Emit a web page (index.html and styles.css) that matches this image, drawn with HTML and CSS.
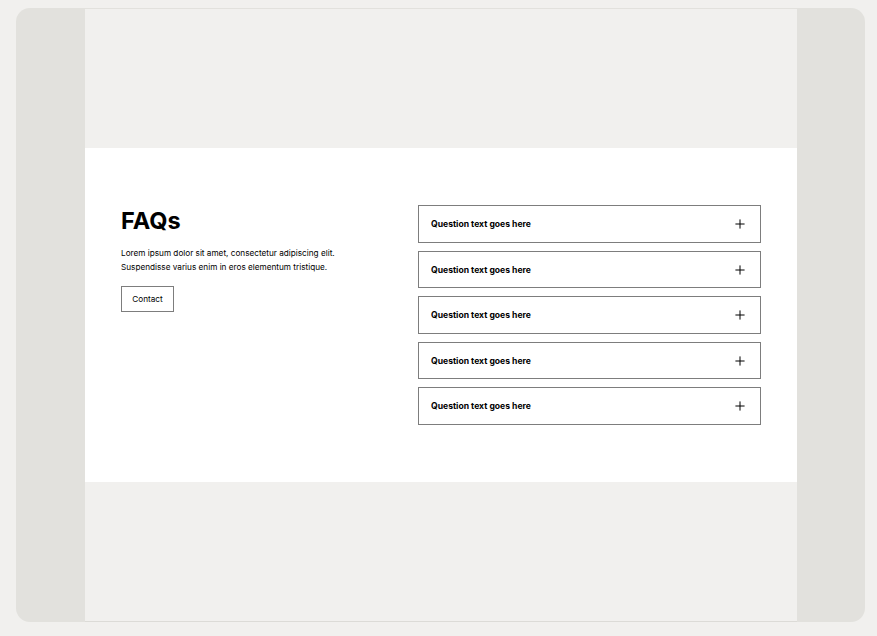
FILE: index.html
```html
<!DOCTYPE html>
<html lang="en">
<head>
<meta charset="utf-8">
<title>FAQs</title>
<link rel="stylesheet" href="styles.css">
</head>
<body>
<div class="frame">
  <div class="canvas">
    <div class="spacer"></div>
    <section class="faq">
      <div class="intro">
        <h1 class="title">FAQs</h1>
        <p class="lead">Lorem ipsum dolor sit amet, consectetur adipiscing elit. Suspendisse varius enim in eros elementum tristique.</p>
        <button class="btn">Contact</button>
      </div>
      <div class="list">
        <div class="item"><span class="q">Question text goes here</span><svg class="plus" viewBox="0 0 12 12"><path d="M6 0.5V11.5M0.5 6H11.5" stroke="#000" stroke-width="1.2" fill="none"/></svg></div>
        <div class="item"><span class="q">Question text goes here</span><svg class="plus" viewBox="0 0 12 12"><path d="M6 0.5V11.5M0.5 6H11.5" stroke="#000" stroke-width="1.2" fill="none"/></svg></div>
        <div class="item"><span class="q">Question text goes here</span><svg class="plus" viewBox="0 0 12 12"><path d="M6 0.5V11.5M0.5 6H11.5" stroke="#000" stroke-width="1.2" fill="none"/></svg></div>
        <div class="item"><span class="q">Question text goes here</span><svg class="plus" viewBox="0 0 12 12"><path d="M6 0.5V11.5M0.5 6H11.5" stroke="#000" stroke-width="1.2" fill="none"/></svg></div>
        <div class="item"><span class="q">Question text goes here</span><svg class="plus" viewBox="0 0 12 12"><path d="M6 0.5V11.5M0.5 6H11.5" stroke="#000" stroke-width="1.2" fill="none"/></svg></div>
      </div>
    </section>
    <div class="spacer bottom"></div>
  </div>
</div>
</body>
</html>
```
FILE: styles.css
```css
* { box-sizing: border-box; }
html, body { margin: 0; padding: 0; }
body {
  background: #f1f0ee;
  font-family: Inter, "Liberation Sans", sans-serif;
  color: #000;
  padding: 8px 12px 14px 16px;
}
.frame {
  width: 849px;
  height: 614px;
  background: #e2e1dd;
  border-radius: 14px;
  overflow: hidden;
  padding-left: 69px;
}
.canvas {
  width: 712px;
  height: 614px;
  background: #f1f0ee;
  border-top: 1px solid #e2e1dd;
  border-bottom: 1px solid #dcdbd7;
  display: flex;
  flex-direction: column;
}
.spacer { height: 139px; flex: none; }
.spacer.bottom { flex: 1; height: auto; }
.faq {
  background: #fff;
  height: 334px;
  padding: 57px 36px 0 36px;
  display: flex;
}
.intro { flex: 1; padding-top: 3px; }
.title {
  font-size: 23.5px;
  font-weight: 700;
  line-height: 26px;
  margin: 0 0 12px 0;
}
.lead {
  font-size: 8.2px;
  line-height: 14px;
  margin: 0 0 12px 0;
  max-width: 232px;
}
.btn {
  font-family: inherit;
  font-size: 8.2px;
  color: #000;
  background: #fff;
  border: 1px solid #7d7d7d;
  width: 53px;
  height: 25.5px;
  padding: 0;
  border-radius: 0;
}
.list {
  width: 343px;
  display: flex;
  flex-direction: column;
  gap: 8px;
}
.item {
  height: 37.5px;
  border: 1px solid #7d7d7d;
  display: flex;
  align-items: center;
  justify-content: space-between;
  padding: 1px 15px 0 12px;
}
.q { font-size: 8.6px; font-weight: 700; }
.plus { width: 10px; height: 10px; display: block; }
```
